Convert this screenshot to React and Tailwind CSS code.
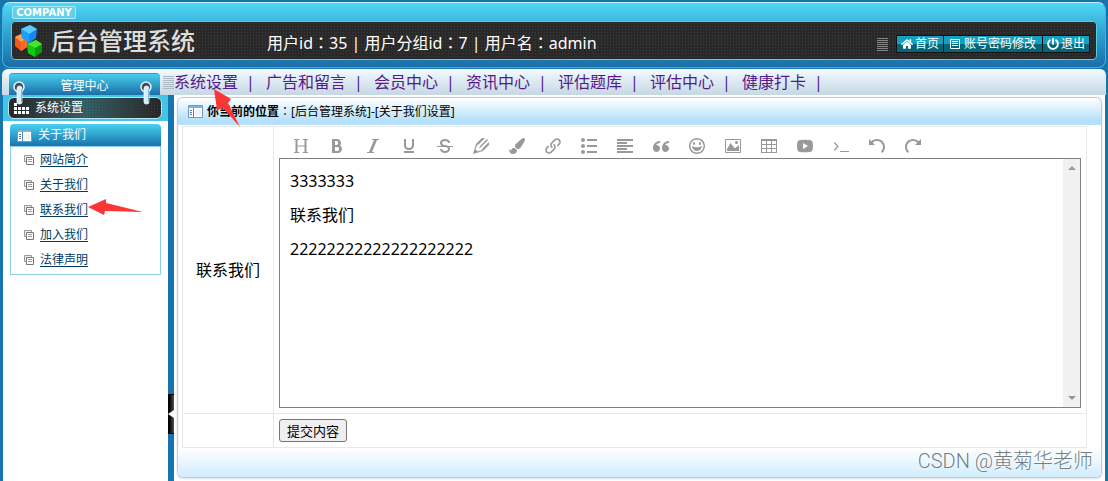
import React from "react";
import { ImBold, ImItalic, ImUnderline, ImStrikethrough, ImPencil2, ImLink, ImList2, ImParagraphLeft, ImQuotesLeft, ImHappy, ImImage, ImTable2, ImUndo, ImRedo } from "react-icons/im";
import { FaPaintBrush, FaPowerOff, FaHome } from "react-icons/fa";

const navItems = ["系统设置", "广告和留言", "会员中心", "资讯中心", "评估题库", "评估中心", "健康打卡"];
const menuItems = ["网站简介", "关于我们", "联系我们", "加入我们", "法律声明"];

function HeadingIcon() {
  return (
    <svg viewBox="0 0 16 16" className="size-4" fill="none" stroke="currentColor">
      <path d="M3.5 1.5v13M12.5 1.5v13" strokeWidth="2" />
      <path d="M3.5 8h9M1 1.5h5.2M9.8 1.5H15M1 14.5h5.2M9.8 14.5H15" strokeWidth="1.2" />
    </svg>
  );
}

function VideoIcon() {
  return (
    <svg viewBox="0 0 16 16" className="size-4" fill="currentColor" fillRule="evenodd">
      <path d="M3 2Q8 1.4 13 2Q15.4 2.200 15.700 4.500Q16.200 8 15.700 11.500Q15.400 13.800 13 14Q8 14.600 3 14Q.6 13.800.3 11.500Q-.2 8 .3 4.500Q.6 2.200 3 2ZM6 5v6l5-3z" />
    </svg>
  );
}

function TerminalIcon() {
  return (
    <svg viewBox="0 0 16 16" className="size-4" fill="none" stroke="currentColor" strokeWidth="1.2">
      <path d="M1.200 4.500 5 8.500l-3.800 4M7 13.500h9" />
    </svg>
  );
}

const tools = [
  ["标题", HeadingIcon], ["加粗", ImBold], ["斜体", ImItalic], ["下划线", ImUnderline], ["删除线", ImStrikethrough],
  ["文字颜色", ImPencil2], ["背景色", FaPaintBrush], ["链接", ImLink], ["列表", ImList2], ["对齐", ImParagraphLeft],
  ["引用", ImQuotesLeft], ["表情", ImHappy], ["图片", ImImage], ["表格", ImTable2], ["视频", VideoIcon],
  ["代码", TerminalIcon], ["撤销", ImUndo], ["重做", ImRedo],
];

function Cubes() {
  return (
    <svg viewBox="0 0 28 32" className="h-8 w-7 shrink-0">
      <path d="m0 12 6-3 7 4-1 9-6 4-6-5z" fill="#f4571b" />
      <path d="m0 12 6-3 7 4-7 4z" fill="#ffa052" />
      <path d="m6 17 7-4-1 9-6 4z" fill="#ff6a24" />
      <path d="m6 4 9-4 7 4-1 9-7 5-7-5z" fill="#1687ec" />
      <path d="m6 4 9-4 7 4-8 5z" fill="#5ccbff" />
      <path d="m6 4 8 5v9l-7-5z" fill="#1ba0ff" />
      <path d="m12 19 9-4 6 4v8l-7 5-7-4z" fill="#0a9d0a" />
      <path d="m12 19 9-4 6 4-7 4z" fill="#45e52c" />
      <path d="m12 19 8 4v9l-7-4z" fill="#13c913" />
    </svg>
  );
}

function PanelIcon() {
  return (
    <svg viewBox="0 0 15 13" className="h-[13px] w-[15px] shrink-0">
      <path d="M.5.5h14v12H.5z" fill="#fff" stroke="#6f9cc4" />
      <path d="M1 1h13v2H1z" fill="#7fb0dc" />
      <path d="M5.500 3v9" stroke="#4f86b8" />
      <path d="M2 5.500h2M2 7.500h2M2 9.500h2" stroke="#55779a" />
      <path d="M7 4h6v7H7z" fill="#f1f4f8" />
    </svg>
  );
}

function LinesIcon({ className }) {
  return (
    <svg viewBox="0 0 11 13" className={className} stroke="currentColor">
      <path d="M0 .5h11M0 2.500h11M0 4.500h11M0 6.500h11M0 8.500h11M0 10.500h11M0 12.500h11" />
    </svg>
  );
}

function ListIcon() {
  return (
    <svg viewBox="0 0 10 10" className="size-2.5" fill="none" stroke="currentColor">
      <path d="M.5.5h9v9h-9zM2 2.500h6M2 4.500h6M2 6.500h6" />
    </svg>
  );
}

function CopyIcon() {
  return (
    <svg viewBox="0 0 10 10" className="size-2.5 shrink-0" fill="none">
      <path d="M.5.5h7v6h-7z" fill="#eee" stroke="#999" />
      <path d="M2.500 2.500h7v7h-7z" fill="#fff" stroke="#777" />
      <path d="M4 4.500h4M4 6.500h4" stroke="#999" />
    </svg>
  );
}

function GridIcon() {
  return (
    <svg viewBox="0 0 15 11" className="h-[11px] w-[15px] shrink-0" fill="none" stroke="#fff" strokeWidth="3" strokeDasharray="3 1">
      <path d="M0 1.500h3M0 5.500h15M0 9.500h15" />
    </svg>
  );
}

function Pin({ className }) {
  return (
    <svg viewBox="0 0 12 24" className={"absolute h-6 w-3 " + className}>
      <circle cx="6" cy="6" r="5" fill="#3f4c55" stroke="#e9f3f8" strokeWidth="1.500" />
      <path d="M4 12V7.500a2.500 2.500 0 0 1 5 0V21a2 2 0 0 1-2 2H6a2 2 0 0 1-2-2z" fill="#d6eefc" stroke="#fff" strokeWidth=".7" />
      <path d="M8.500 8v13" stroke="#79b8e4" />
    </svg>
  );
}

function Colon() {
  return <span className="font-['Noto_Sans_CJK_TC',sans-serif]">：</span>;
}

const dots = "bg-[radial-gradient(#3d3d3d_30%,transparent_40%)] bg-size-[3px_3px]";

export default function App() {
  return (
    <div className="relative flex min-h-screen flex-col bg-[#1874ac] px-0.5 font-['Noto_Sans','Noto_Sans_CJK_SC',sans-serif] text-xs text-black">
      <header className="mt-0.5 rounded-lg border border-[#3eb3dd] border-t-[#bdf1fd] bg-linear-to-b from-[#4edaf6] via-[#2e9fcd] to-[#1a6ea8] px-2 pt-[3px] pb-[7px]">
        <div className="ml-px flex h-[13px] w-16 items-center justify-center rounded-xs border border-[#a5eafa] bg-[#62d0ea] font-['DejaVu_Sans',sans-serif] text-[10px] font-bold text-white">COMPANY</div>
        <div className="mt-0.5 rounded-sm border border-[#55cfe9] bg-[#292929]">
          <div className={"flex h-[37px] items-center rounded-sm pr-1.5 " + dots}>
            <div className="flex w-[255px] shrink-0 items-center gap-2 pl-[3px]">
              <Cubes />
              <h1 className="text-2xl leading-8 font-medium text-[#dedede]">后台管理系统</h1>
            </div>
            <p className="flex-1 pt-1 text-base whitespace-nowrap text-white">用户id<Colon />35 | 用户分组id<Colon />7 | 用户名<Colon />admin</p>
            <LinesIcon className="mt-2 mr-2 h-[13px] w-[11px] text-[#888]" />
            <nav className="mt-1.5 flex gap-px border border-[#111] bg-[#111] text-xs text-white">
              <a href="#home" className="flex h-4 items-center gap-0.5 bg-linear-to-b from-[#159fc0] from-50% to-[#056579] to-50% px-1"><FaHome className="size-3" />首页</a>
              <a href="#account" className="flex h-4 items-center gap-1 bg-linear-to-b from-[#159fc0] from-50% to-[#056579] to-50% px-1.5"><ListIcon />账号密码修改</a>
              <a href="#logout" className="flex h-4 items-center gap-0.5 bg-linear-to-b from-[#159fc0] from-50% to-[#056579] to-50% px-1"><FaPowerOff className="size-3" />退出</a>
            </nav>
          </div>
        </div>
      </header>

      <div className="mt-px flex h-[26px] items-end rounded-t-md bg-linear-to-b from-[#f2faff] to-[#c6d8e4] pl-[7px]">
        <div className="relative flex h-[22px] w-[151px] shrink-0 items-center justify-center rounded-t-sm border-t border-[#2e9fcb] bg-linear-to-b from-[#49cfed] to-[#1a70a8] pt-0.5 text-xs text-white">
          管理中心
          <Pin className="top-[7px] left-1" />
          <Pin className="top-[7px] right-2" />
        </div>
        <nav className="ml-[3px] flex h-full items-center text-base whitespace-nowrap text-[#551a8b]">
          <LinesIcon className="h-[13px] w-[11px] text-[#aab9c3]" />
          {navItems.map((t) => (
            <span key={t} className="flex">
              <a href="#nav">{t}</a>
              <span className="w-7 pl-2">|</span>
            </span>
          ))}
        </nav>
      </div>

      <div className="flex flex-1 pr-px pl-px">
        <aside className="w-[165px] shrink-0 bg-white">
          <div className="bg-[#45c5e6] pt-0.5 pr-1.5 pb-0.5 pl-[5px]">
            <div className="rounded-md border border-[#b8e4f0] bg-linear-to-r from-[#252525] via-[#32636c] to-[#252525]">
              <div className={"flex h-5 items-center gap-1.5 rounded-md pl-[5px] text-white " + dots}>
                <GridIcon />系统设置
              </div>
            </div>
          </div>
          <div className="mx-[7px] mt-[3px]">
            <h2 className="flex h-[22px] items-center gap-1.5 rounded-t-sm bg-linear-to-b from-[#49d3ef] to-[#1873ac] pl-[7px] text-white"><PanelIcon />关于我们</h2>
            <ul className="border border-[#8ed0e4] pb-0.5">
              {menuItems.map((t) => (
                <li key={t} className="flex h-[25px] items-center gap-1.5 pl-[13px]">
                  <CopyIcon />
                  <a href="#item" className="text-[#003a63] underline underline-offset-2">{t}</a>
                </li>
              ))}
            </ul>
          </div>
        </aside>
        <div className="flex w-1.5 shrink-0 flex-col">
          <button aria-label="收起" className="mt-[299px] flex h-10 items-center border-y border-black bg-linear-to-r from-black to-[#555]">
            <svg viewBox="0 0 6 8" className="h-2 w-1.5" fill="#fff"><path d="M0 4l6-4v8z" /></svg>
          </button>
        </div>
        <main className="flex min-w-0 flex-1 bg-white px-[3px] pt-0.5 pb-[3px]">
          <section className="flex min-w-0 flex-1 flex-col rounded-md border border-[#a8cfe6] border-l-[#c4ccd2] shadow-sm">
            <div className="flex h-[27px] shrink-0 items-center gap-1 rounded-t-md bg-linear-to-b from-white to-[#b5e0fa] to-85% pl-2.5">
              <PanelIcon />
              <p><b>你当前的位置</b><Colon />[后台管理系统]-[关于我们设置]</p>
            </div>
            <div className="mt-px mr-3.5 ml-1 flex shrink-0">
              <table className="w-full border-collapse border border-[#e8e8e8] text-base">
                <tbody>
                  <tr>
                    <th scope="row" className="w-[91px] border border-[#e8e8e8] font-normal"><label htmlFor="content">联系我们</label></th>
                    <td className="border border-[#e8e8e8] px-[5px] pb-[5px]">
                      <div className="flex h-[31px] items-center gap-1 pt-1.5 pl-1.5 text-[#999]">
                        {tools.map(([label, Icon]) => (
                          <button key={label} type="button" aria-label={label} className="flex h-6 w-8 items-center justify-center"><Icon className="size-4" /></button>
                        ))}
                      </div>
                      <div className="flex h-[250px] border border-[#808080]">
                        <textarea id="content" className="min-w-0 flex-1 resize-none overflow-hidden px-2.5 py-[5px] text-base leading-[34px] outline-none" defaultValue={"3333333\n联系我们\n22222222222222222222"} />
                        <div className="flex w-[17px] flex-col items-center justify-between bg-[#f1f1f1] py-[7px]">
                          <svg viewBox="0 0 8 4" className="h-1 w-2" fill="#999"><path d="M0 4l4-4 4 4z" /></svg>
                          <svg viewBox="0 0 8 4" className="h-1 w-2" fill="#999"><path d="M0 0l4 4 4-4z" /></svg>
                        </div>
                      </div>
                    </td>
                  </tr>
                  <tr>
                    <td className="border border-[#e8e8e8]" />
                    <td className="h-[34px] border border-[#e8e8e8] px-[5px] align-middle">
                      <button type="submit" className="block h-[23px] rounded-[3px] border border-[#767676] bg-[#efefef] px-[7px] text-[13px] leading-5">提交内容</button>
                    </td>
                  </tr>
                </tbody>
              </table>
            </div>
            <div className="min-h-[29px] flex-1 rounded-b-md bg-linear-to-b from-white to-[#d0edfd]" />
          </section>
        </main>
      </div>

      <span className="absolute right-[15px] bottom-1 font-[Roboto,'Noto_Sans_CJK_SC',sans-serif] text-xl leading-8 font-light text-[#767c82] [text-shadow:-1px_-1px_0_#fff]">CSDN @黄菊华老师</span>
      <svg viewBox="0 0 32 42" className="absolute top-[87px] left-[211px] h-[42px] w-8" fill="#fb3634"><path d="M3 2 20 12 17 16 29 40 12 21 6 23z" /></svg>
      <svg viewBox="0 0 56 18" className="absolute top-[198px] left-[88px] h-[18px] w-14" fill="#fb3634"><path d="M0 9 18 1v4l37 9-38-1-1 4z" /></svg>
    </div>
  );
}
